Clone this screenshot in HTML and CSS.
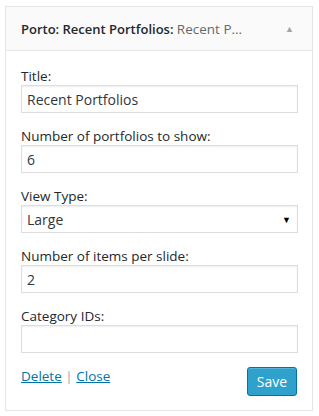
FILE: index.html
```html
<!DOCTYPE html>
<html lang="en">
<head>
    <meta charset="UTF-8">
    <meta name="viewport" content="width=device-width, initial-scale=1.0">
    <title>Porto: Recent Portfolios</title>
    <link rel="stylesheet" href="styles.css">
</head>
<body>
    <div class="widget">
        <div class="widget-top">
            <h3 class="widget-title">Porto: Recent Portfolios: <span class="in-title">Recent P...</span></h3>
            <span class="toggle">&#9650;</span>
        </div>
        <form class="widget-inside">
            <div class="field">
                <label for="title">Title:</label>
                <input type="text" id="title" value="Recent Portfolios">
            </div>
            <div class="field">
                <label for="number">Number of portfolios to show:</label>
                <input type="text" id="number" value="6">
            </div>
            <div class="field">
                <label for="view">View Type:</label>
                <div class="select">
                    <span>Large</span>
                    <span class="caret">&#9660;</span>
                </div>
            </div>
            <div class="field">
                <label for="items">Number of items per slide:</label>
                <input type="text" id="items" value="2">
            </div>
            <div class="field">
                <label for="cats">Category IDs:</label>
                <input type="text" id="cats" value="">
            </div>
            <div class="controls">
                <div class="links">
                    <a href="#">Delete</a> <span class="sep">|</span> <a href="#">Close</a>
                </div>
                <button type="button" class="save">Save</button>
            </div>
        </form>
    </div>
</body>
</html>
```

FILE: styles.css
```css
body {
    margin: 0;
    padding: 6px 6px 0 5px;
    background-color: #fff;
    font-family: "Open Sans", sans-serif;
    font-size: 13px;
    color: #222;
}
.widget {
    width: 306px;
    border: 1px solid #e5e5e5;
    background-color: #fff;
    box-shadow: 0 1px 1px rgba(0, 0, 0, 0.04);
}
.widget-top {
    display: flex;
    align-items: center;
    justify-content: space-between;
    height: 43px;
    padding: 0 18px 0 15px;
    background-color: #fafafa;
    border-bottom: 1px solid #e5e5e5;
}
.widget-title {
    margin: 0;
    font-size: 13px;
    font-weight: 600;
    color: #23282d;
    white-space: nowrap;
}
.in-title {
    font-size: 13.5px;
    font-weight: 400;
    color: #686868;
}
.toggle {
    font-size: 9px;
    color: #a0a5aa;
}
.widget-inside {
    padding: 16px 15px 14px 15px;
}
.field {
    margin-bottom: 14px;
}
.field:last-of-type {
    margin-bottom: 12px;
}
label {
    display: block;
    line-height: 18px;
    font-size: 13.5px;
    color: #23282d;
}
input, .select {
    display: block;
    box-sizing: border-box;
    width: 277px;
    height: 28px;
    margin: 0;
    padding: 3px 5px;
    border: 1px solid #ddd;
    box-shadow: inset 0 1px 2px rgba(0, 0, 0, 0.07);
    font-family: "Open Sans", sans-serif;
    font-size: 14px;
    color: #32373c;
    background-color: #fff;
}
.select {
    display: flex;
    align-items: center;
    justify-content: space-between;
    padding: 0 6px 0 5px;
}
.caret {
    font-size: 9px;
    color: #000;
}
.controls {
    display: flex;
    justify-content: space-between;
    align-items: flex-start;
}
.links {
    line-height: 18px;
    font-size: 13.5px;
    color: #a0a5aa;
}
.links a {
    color: #0074a2;
}
.sep {
    color: #a0a5aa;
}
.save {
    width: 50px;
    height: 29px;
    padding: 0;
    border: 1px solid #0074a2;
    border-radius: 3px;
    background-color: #2ea2cc;
    box-shadow: inset 0 1px 0 rgba(120, 200, 230, 0.5);
    color: #fff;
    font-family: "Open Sans", sans-serif;
    font-size: 14px;
}
```
